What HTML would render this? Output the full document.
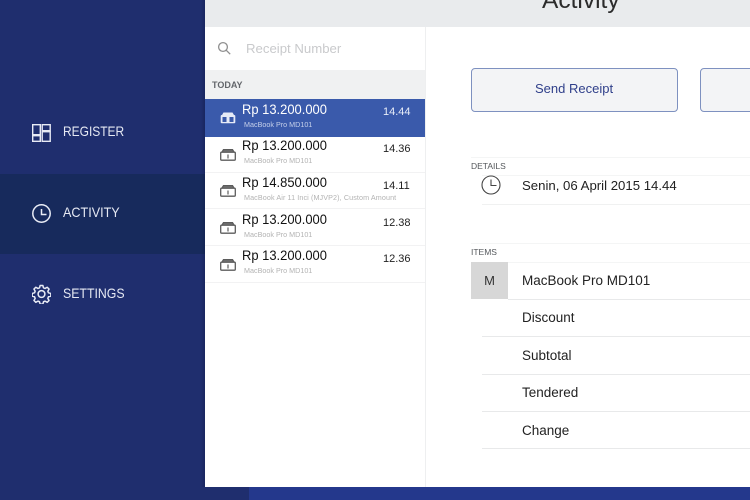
<!DOCTYPE html>
<html><head><meta charset="utf-8">
<style>
html,body{margin:0;padding:0}
body{width:750px;height:500px;overflow:hidden;position:relative;background:#1f2e6e;font-family:"Liberation Sans",sans-serif}
div,svg{position:absolute}
.t{white-space:nowrap;line-height:16px}
.nav{left:63px;color:#e6e9f3;font-size:14px;transform-origin:left center}
.amt{left:242px;font-size:14px;color:#111;transform:scaleX(.925);transform-origin:left center}
.sub{left:244px;font-size:7.2px;color:#b3b3b3}
.tm{left:383px;font-size:11px;color:#222}
.li{left:522px;font-size:13.5px;color:#222}
.ln{height:1px;background:#e8e9ea}
.rl{height:1px;background:#f2f2f3;left:205px;width:220px}
</style></head><body>
<div style="left:0;top:174px;width:205px;height:80px;background:#172a5c"></div>
<div style="left:201px;top:0;width:4px;height:487px;background:linear-gradient(90deg,rgba(10,20,60,0),rgba(10,20,60,.3))"></div>

<svg style="left:32px;top:124px" width="19" height="18" viewBox="0 0 19 18" fill="none" stroke="#e8ebf5" stroke-width="1.4"><rect x=".7" y=".7" width="7.6" height="10"/><rect x=".7" y="11.7" width="7.6" height="5.6"/><rect x="10.2" y=".7" width="8" height="6"/><rect x="10.2" y="7.700" width="8" height="9.600"/></svg>
<div class="t nav" style="top:123px;transform:scaleX(.855)">REGISTER</div>

<svg style="left:32px;top:204px" width="19" height="19" viewBox="0 0 19 19" fill="none" stroke="#e8ebf5" stroke-width="1.5"><circle cx="9.5" cy="9.5" r="8.7"/><path d="M9.500 5v5.500h5"/></svg>
<div class="t nav" style="top:204px;transform:scaleX(.9)">ACTIVITY</div>

<svg style="left:32px;top:284px" width="19" height="20" viewBox="0 0 24 24" fill="none" stroke="#e8ebf5" stroke-width="1.900" stroke-linejoin="round"><circle cx="12" cy="12" r="4.300"/><path d="M10.300 1.200h3.400l.8 3 2 .8 2.700-1.500 2.300 2.300-1.500 2.700.8 2 3 .8v3.400l-3 .8-.8 2 1.500 2.700-2.300 2.300-2.700-1.500-2 .8-.8 3h-3.400l-.8-3-2-.8-2.700 1.500-2.300-2.300 1.500-2.700-.8-2-3-.8v-3.400l3-.8.8-2-1.500-2.700 2.300-2.300 2.700 1.500 2-.8z"/></svg>
<div class="t nav" style="top:285px;transform:scaleX(.88)">SETTINGS</div>

<!-- panel -->
<div style="left:205px;top:0;width:545px;height:487px;background:#fff"></div>
<div style="left:205px;top:0;width:545px;height:27px;background:#e9ebed"></div>
<div class="t" style="left:542px;top:-11px;font-size:24.500px;line-height:24px;color:#2b2b2b">Activity</div>
<div style="left:425px;top:27px;width:1px;height:460px;background:#eeeff0"></div>

<!-- search -->
<svg style="left:217px;top:41px" width="15" height="15" viewBox="0 0 15 15" fill="none" stroke="#8f8f8f" stroke-width="1.3"><circle cx="6" cy="6" r="4.4"/><path d="M9.300 9.300l3.900 3.900"/></svg>
<div class="t" style="left:246px;top:41px;font-size:13.200px;color:#c9cacc">Receipt Number</div>

<div style="left:205px;top:70px;width:220px;height:29px;background:#f0f1f2"></div>
<div class="t" style="left:212px;top:77px;font-size:9px;font-weight:bold;color:#63666b">TODAY</div>

<div style="left:205px;top:99px;width:220px;height:38px;background:#3a5aab"></div>
<div class="rl" style="top:172px"></div>
<div class="rl" style="top:208px"></div>
<div class="rl" style="top:245px"></div>
<div class="rl" style="top:282px"></div>

<!-- row icons -->
<svg style="left:220px;top:112px" width="16" height="12" viewBox="0 0 16 12"><path d="M2 3l1.500-2.500h9L14 3z" fill="#e6ebf7"/><rect x=".7" y="3" width="14.600" height="8.300" rx="1" fill="#e6ebf7"/><rect x="2.500" y="5" width="4" height="5" fill="#3a5aab"/><rect x="9.500" y="5" width="4" height="5" fill="#3a5aab"/></svg>
<svg style="left:220px;top:149px" width="16" height="12" viewBox="0 0 16 12" fill="none" stroke="#5c5c5c" stroke-width="1.300"><path d="M2 3l1.500-2.300h9L14 3" fill="#777"/><rect x=".7" y="3.200" width="14.600" height="8" rx="1"/><path d="M8 5.500v4" stroke-width="1.200"/></svg>
<svg style="left:220px;top:185px" width="16" height="12" viewBox="0 0 16 12" fill="none" stroke="#5c5c5c" stroke-width="1.300"><path d="M2 3l1.500-2.300h9L14 3" fill="#777"/><rect x=".7" y="3.200" width="14.600" height="8" rx="1"/><path d="M8 5.500v4" stroke-width="1.200"/></svg>
<svg style="left:220px;top:222px" width="16" height="12" viewBox="0 0 16 12" fill="none" stroke="#5c5c5c" stroke-width="1.300"><path d="M2 3l1.500-2.300h9L14 3" fill="#777"/><rect x=".7" y="3.200" width="14.600" height="8" rx="1"/><path d="M8 5.500v4" stroke-width="1.200"/></svg>
<svg style="left:220px;top:259px" width="16" height="12" viewBox="0 0 16 12" fill="none" stroke="#5c5c5c" stroke-width="1.300"><path d="M2 3l1.500-2.300h9L14 3" fill="#777"/><rect x=".7" y="3.200" width="14.600" height="8" rx="1"/><path d="M8 5.500v4" stroke-width="1.200"/></svg>

<div class="t amt" style="top:101px;color:#fff">Rp 13.200.000</div><div class="t sub" style="top:117px;color:#c5d0ea">MacBook Pro MD101</div><div class="t tm" style="top:104px;color:#e8edf8">14.44</div>
<div class="t amt" style="top:137px">Rp 13.200.000</div><div class="t sub" style="top:153px">MacBook Pro MD101</div><div class="t tm" style="top:141px">14.36</div>
<div class="t amt" style="top:174px">Rp 14.850.000</div><div class="t sub" style="top:190px;letter-spacing:.1px">MacBook Air 11 Inci (MJVP2), Custom Amount</div><div class="t tm" style="top:178px">14.11</div>
<div class="t amt" style="top:211px">Rp 13.200.000</div><div class="t sub" style="top:227px">MacBook Pro MD101</div><div class="t tm" style="top:215px">12.38</div>
<div class="t amt" style="top:247px">Rp 13.200.000</div><div class="t sub" style="top:263px">MacBook Pro MD101</div><div class="t tm" style="top:251px">12.36</div>

<!-- buttons -->
<div style="left:471px;top:68px;width:205px;height:42px;border:1px solid #7e91c0;border-radius:4px;background:#f3f4f6"></div>
<div class="t" style="left:535px;top:81px;font-size:13px;color:#2f3f8a">Send Receipt</div>
<div style="left:700px;top:68px;width:70px;height:42px;border:1px solid #7e91c0;border-radius:4px;background:#f3f4f6"></div>

<!-- details -->
<div class="ln" style="left:471px;top:157px;width:279px;background:#f4f5f5"></div>
<div class="t" style="left:471px;top:158px;font-size:8.500px;color:#55585c">DETAILS</div>
<div class="ln" style="left:482px;top:175px;width:268px;background:#f4f5f5"></div>
<svg style="left:481px;top:175px" width="20" height="20" viewBox="0 0 20 20" fill="none" stroke="#444" stroke-width="1.100"><circle cx="10" cy="10" r="9"/><path d="M10 4.500v6h5.500"/></svg>
<div class="t" style="left:522px;top:178px;font-size:13.200px;color:#222">Senin, 06 April 2015 14.44</div>
<div class="ln" style="left:482px;top:204px;width:268px;background:#f0f1f1"></div>

<!-- items -->
<div class="ln" style="left:471px;top:243px;width:279px;background:#f4f5f5"></div>
<div class="t" style="left:471px;top:244px;font-size:8.500px;color:#55585c">ITEMS</div>
<div class="ln" style="left:471px;top:262px;width:279px;background:#f4f5f5"></div>
<div style="left:471px;top:262px;width:37px;height:37px;background:#d7d7d7"></div>
<div class="t" style="left:471px;top:273px;width:37px;text-align:center;font-size:13px;color:#333">M</div>
<div class="t li" style="top:273px">MacBook Pro MD101</div>
<div class="ln" style="left:508px;top:299px;width:242px"></div>
<div class="t li" style="top:310px">Discount</div>
<div class="ln" style="left:482px;top:336px;width:268px"></div>
<div class="t li" style="top:348px">Subtotal</div>
<div class="ln" style="left:482px;top:374px;width:268px"></div>
<div class="t li" style="top:385px">Tendered</div>
<div class="ln" style="left:482px;top:411px;width:268px"></div>
<div class="t li" style="top:423px">Change</div>
<div class="ln" style="left:482px;top:448px;width:268px"></div>

<!-- bottom -->
<div style="left:205px;top:487px;width:44px;height:13px;background:#1f2e6e"></div>
<div style="left:249px;top:487px;width:501px;height:13px;background:#24388c"></div>
</body></html>
